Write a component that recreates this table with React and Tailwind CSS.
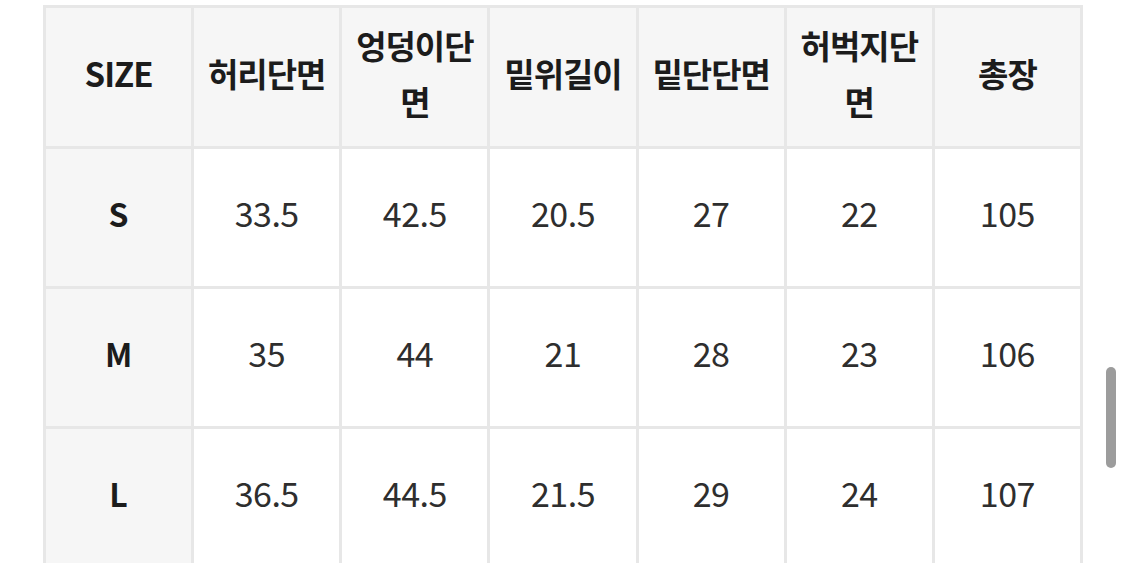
import React from "react";

const headers = [["SIZE"], ["허리단면"], ["엉덩이단", "면"], ["밑위길이"], ["밑단단면"], ["허벅지단", "면"], ["총장"]];
const rows = [
  ["S", "33.5", "42.5", "20.5", "27", "22", "105"],
  ["M", "35", "44", "21", "28", "23", "106"],
  ["L", "36.5", "44.5", "21.5", "29", "24", "107"],
  ["", "", "", "", "", "", ""],
];

export default function App() {
  return (
    <div
      className="relative w-[1125px] h-[563px] overflow-hidden bg-white"
      style={{ fontFamily: '"Noto Sans CJK KR", "Noto Sans", sans-serif' }}
    >
      <div className="pt-[5px] pl-[43px]">
        <table className="border-collapse w-[1040px] table-fixed">
          <thead>
            <tr className="h-[141px]">
              {headers.map((h, i) => (
                <th
                  key={i}
                  className="border-[3px] border-[#e7e7e7] bg-[#f6f6f6] text-[#1c1c1c] font-bold text-[33px] leading-[56px] tracking-[-1px] align-middle text-center p-0 pb-[8px]"
                >
                  {h.map((l, j) => (
                    <div key={j}>{l}</div>
                  ))}
                </th>
              ))}
            </tr>
          </thead>
          <tbody>
            {rows.map((r, ri) => (
              <tr key={ri} className="h-[140px]">
                {r.map((c, ci) => (
                  <td
                    key={ci}
                    className={
                      ci === 0
                        ? "border-[3px] border-[#e7e7e7] bg-[#f6f6f6] text-[#1c1c1c] font-bold text-[32px] text-center align-middle p-0 pb-[10px]"
                        : "border-[3px] border-[#e7e7e7] bg-white text-[#2e2e2e] text-[34px] tracking-[-0.5px] text-center align-middle p-0 pb-[11px]"
                    }
                  >
                    {c}
                  </td>
                ))}
              </tr>
            ))}
          </tbody>
        </table>
      </div>
      <div className="absolute left-[1106px] top-[367px] w-[10px] h-[101px] rounded-full bg-[#9c9c9c]" />
    </div>
  );
}
